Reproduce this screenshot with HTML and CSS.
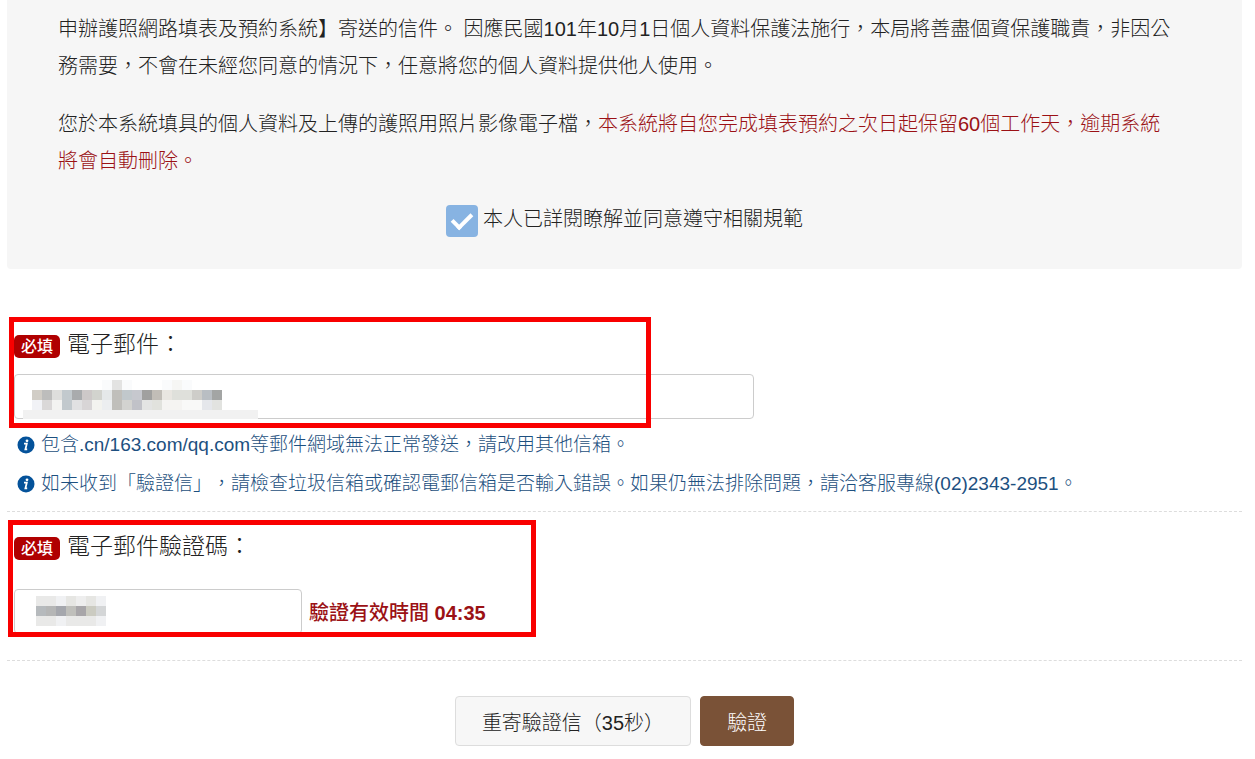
FILE: index.html
```html
<!DOCTYPE html>
<html lang="zh-Hant-TW">
<head>
    <meta charset="UTF-8">
    <meta name="viewport" content="width=device-width, initial-scale=1.0">
    <title>電子郵件驗證</title>
    <link rel="stylesheet" href="styles.css">
</head>
<body>
    <section class="terms">
        <div class="terms-text">
            <p>申辦護照網路填表及預約系統】寄送的信件。 因應民國101年10月1日個人資料保護法施行，本局將善盡個資保護職責，非因公務需要，不會在未經您同意的情況下，任意將您的個人資料提供他人使用。</p>
            <p>您於本系統填具的個人資料及上傳的護照用照片影像電子檔，<span class="warning">本系統將自您完成填表預約之次日起保留60個工作天，逾期系統將會自動刪除。</span></p>
        </div>
        <div class="agree">
            <input type="checkbox" id="agree" class="agree-box" checked>
            <label for="agree">本人已詳閱瞭解並同意遵守相關規範</label>
        </div>
    </section>

    <form class="verify-form">
        <div class="form-group email-group">
            <div class="form-label">
                <span class="required">必填</span>
                <label for="email">電子郵件：</label>
            </div>
            <div class="field">
                <input type="email" id="email" class="text-input email-input">
                <svg class="mask email-mask" width="235" height="40" viewBox="0 0 235 40" shape-rendering="crispEdges" aria-hidden="true">
                    <path fill="#f1f1f1" d="M0 30h235v9H0z"/>
                    <path fill="#fafbfc" d="M79 0h10v10H79zM99 0h10v10H99zM139 0h10v10h-10zM159 0h10v10h-10z"/>
                    <path fill="#e3e3e2" d="M89 0h10v10H89z"/>
                    <path fill="#f6f6f4" d="M149 0h10v10h-10z"/>
                    <path fill="#d1cdc6" d="M9 10h10v10H9z"/>
                    <path fill="#bdbdbc" d="M19 10h10v10H19z"/>
                    <path fill="#dededc" d="M29 10h10v10H29z"/>
                    <path fill="#c2c9cd" d="M39 10h10v20H39z"/>
                    <path fill="#a9abad" d="M49 10h10v10H49z"/>
                    <path fill="#cdc8c8" d="M59 10h10v10H59z"/>
                    <path fill="#d2d3ce" d="M69 10h10v10H69z"/>
                    <path fill="#e5e8e9" d="M79 10h10v10H79z"/>
                    <path fill="#c0bfbb" d="M89 10h10v20H89z"/>
                    <path fill="#c1c8cc" d="M99 10h10v10H99z"/>
                    <path fill="#c6c8ce" d="M109 10h10v10h-10z"/>
                    <path fill="#a0a09f" d="M119 10h10v10h-10z"/>
                    <path fill="#c1bdb7" d="M129 10h10v10h-10z"/>
                    <path fill="#e9e6e1" d="M139 10h10v10h-10z"/>
                    <path fill="#dfe0db" d="M149 10h20v10h-20z"/>
                    <path fill="#cecdc9" d="M169 10h10v10h-10z"/>
                    <path fill="#b9bec3" d="M179 10h10v10h-10z"/>
                    <path fill="#a3a5a4" d="M189 10h10v10h-10z"/>
                    <path fill="#f1f2f6" d="M9 20h10v10H9z"/>
                    <path fill="#dad8d8" d="M19 20h10v10H19z"/>
                    <path fill="#f3f3f1" d="M29 20h10v10H29z"/>
                    <path fill="#e1e1e2" d="M49 20h10v10H49z"/>
                    <path fill="#d8d5d6" d="M59 20h10v10H59z"/>
                    <path fill="#f3f3ef" d="M69 20h10v10H69z"/>
                    <path fill="#eceef0" d="M79 20h10v10H79z"/>
                    <path fill="#d3d3d0" d="M99 20h10v10H99z"/>
                    <path fill="#c1c2c8" d="M109 20h10v10h-10z"/>
                    <path fill="#e3e4e3" d="M119 20h10v10h-10z"/>
                    <path fill="#e1e2dd" d="M129 20h10v10h-10z"/>
                    <path fill="#f5f4f2" d="M139 20h20v10h-20z"/>
                    <path fill="#f9f9f8" d="M159 20h20v10h-20z"/>
                    <path fill="#e5e7eb" d="M179 20h10v10h-10z"/>
                    <path fill="#e2e3e0" d="M189 20h10v10h-10z"/>
                </svg>
            </div>
            <ul class="notes">
                <li>
                    <svg class="info-icon" viewBox="0 0 18 18" aria-hidden="true">
                        <circle cx="9" cy="9" r="8.5" fill="#04529a"/>
                        <circle cx="10" cy="4.8" r="1.4" fill="#fff"/>
                        <path d="M7 7.6h2.8L8.4 13.4h1.8" fill="none" stroke="#fff" stroke-width="1.8"/>
                    </svg>
                    <span>包含.cn/163.com/qq.com等郵件網域無法正常發送，請改用其他信箱。</span>
                </li>
                <li>
                    <svg class="info-icon" viewBox="0 0 18 18" aria-hidden="true">
                        <circle cx="9" cy="9" r="8.5" fill="#04529a"/>
                        <circle cx="10" cy="4.8" r="1.4" fill="#fff"/>
                        <path d="M7 7.6h2.8L8.4 13.4h1.8" fill="none" stroke="#fff" stroke-width="1.8"/>
                    </svg>
                    <span>如未收到「驗證信」，請檢查垃圾信箱或確認電郵信箱是否輸入錯誤。如果仍無法排除問題，請洽客服專線(02)2343-2951。</span>
                </li>
            </ul>
            <div class="highlight email-highlight"></div>
        </div>

        <div class="form-group code-group">
            <div class="form-label">
                <span class="required">必填</span>
                <label for="code">電子郵件驗證碼：</label>
            </div>
            <div class="field">
                <input type="text" id="code" class="text-input code-input">
                <svg class="mask code-mask" width="70" height="30" viewBox="0 0 70 30" shape-rendering="crispEdges" aria-hidden="true">
                    <path fill="#e9e9e8" d="M0 0h30v10H0zM0 20h70v10H0z"/>
                    <path fill="#f0f1f3" d="M20 0h10v10H20zM60 0h10v10H60zM20 20h10v10H20zM60 20h10v10H60z"/>
                    <path fill="#e6e6e3" d="M30 0h10v10H30zM50 0h10v10H50z"/>
                    <path fill="#eeeeee" d="M40 0h10v10H40z"/>
                    <path fill="#b6babd" d="M0 10h10v10H0z"/>
                    <path fill="#b5b6b6" d="M10 10h10v10H10z"/>
                    <path fill="#a5a7ad" d="M20 10h10v10H20z"/>
                    <path fill="#bfbfbb" d="M30 10h10v10H30z"/>
                    <path fill="#a8a6a9" d="M40 10h10v10H40z"/>
                    <path fill="#cbcbc1" d="M50 10h10v10H50z"/>
                    <path fill="#d4d6d7" d="M60 10h10v10H60z"/>
                </svg>
                <span class="timer">驗證有效時間 <strong>04:35</strong></span>
            </div>
            <div class="highlight code-highlight"></div>
        </div>

        <div class="actions">
            <button type="button" class="btn btn-resend">重寄驗證信（35秒）</button>
            <button type="submit" class="btn btn-verify">驗證</button>
        </div>
    </form>
</body>
</html>
```
FILE: styles.css
```css
* {
    margin: 0;
    padding: 0;
    box-sizing: border-box;
}

body {
    padding: 0 13px 0 7px;
    background: #fff;
    color: #222;
    font-family: "Liberation Sans", "Noto Sans CJK TC", sans-serif;
    font-size: 20px;
    font-weight: 300;
    text-spacing-trim: space-all;
}

/* terms panel */
.terms {
    padding: 11px 0 32px;
    background: #f6f6f6;
    border-radius: 0 0 4px 4px;
}

.terms-text {
    padding: 0 67px 0 51px;
    line-height: 37px;
}

.terms-text p {
    margin-bottom: 21px;
}

.warning {
    color: #9b1115;
}

.agree {
    display: flex;
    justify-content: center;
    gap: 5px;
    padding-top: 4px;
    line-height: 28px;
}

.agree-box {
    appearance: none;
    width: 32px;
    height: 32px;
    background: #87b3e2;
    border-radius: 4px;
    cursor: pointer;
}

.agree-box:checked::before {
    content: "";
    display: block;
    box-sizing: border-box;
    width: 20px;
    height: 12px;
    margin: 8px 0 0 6px;
    border-left: 4px solid #fff;
    border-bottom: 4px solid #fff;
    transform: rotate(-45deg);
}

/* form */
.verify-form {
    padding-top: 48px;
}

.form-group {
    position: relative;
    padding-left: 7px;
    border-bottom: 1px dashed #ddd;
}

.email-group {
    padding-top: 10px;
    padding-bottom: 8px;
}

.code-group {
    padding-top: 17px;
    padding-bottom: 26px;
}

.form-label {
    display: flex;
    align-items: center;
    gap: 7px;
    margin-bottom: 13px;
    font-size: 23px;
    line-height: 34px;
}

.code-group .form-label {
    margin-bottom: 26px;
}

.required {
    margin-top: 4px;
    padding: 0 7px;
    background: #b00000;
    border-radius: 5px;
    color: #fff;
    font-size: 16px;
    font-weight: 500;
    line-height: 23px;
}

.field {
    position: relative;
    display: flex;
    align-items: center;
    gap: 7px;
}

.text-input {
    width: 100%;
    height: 45px;
    padding: 0 16px;
    background: #fff;
    border: 1px solid #ccc;
    border-radius: 4px;
    font: inherit;
}

.email-input {
    max-width: 740px;
}

.code-input {
    max-width: 288px;
}

/* pixelated cover over private values */
.mask {
    position: absolute;
    pointer-events: none;
}

.email-mask {
    left: 9px;
    top: 6px;
}

.code-mask {
    left: 22px;
    top: 7px;
}

.timer {
    color: #9b1115;
    font-weight: 500;
}

.timer strong {
    font-weight: bold;
}

.notes {
    margin-top: 6px;
    padding-left: 3px;
    list-style: none;
    color: #1d5080;
    font-size: 19px;
    line-height: 39px;
}

.notes li {
    display: flex;
    align-items: center;
    gap: 6px;
}

.info-icon {
    flex: none;
    width: 18px;
    height: 18px;
}

/* red marker frames */
.highlight {
    position: absolute;
    border: 5px solid #f90000;
    pointer-events: none;
}

.email-highlight {
    left: 2px;
    top: 0;
    width: 642px;
    height: 111px;
}

.code-highlight {
    left: 1px;
    top: 8px;
    width: 528px;
    height: 117px;
}

.actions {
    display: flex;
    justify-content: center;
    gap: 9px;
    padding: 35px 0 13px;
}

.btn {
    height: 50px;
    padding: 0 26px;
    border: 1px solid #ddd;
    border-radius: 4px;
    font: inherit;
    cursor: pointer;
}

.btn-resend {
    background: #f7f7f7;
    color: #222;
}

.btn-verify {
    background: #7a5237;
    border-color: #7a5237;
    color: #fff;
}
```
